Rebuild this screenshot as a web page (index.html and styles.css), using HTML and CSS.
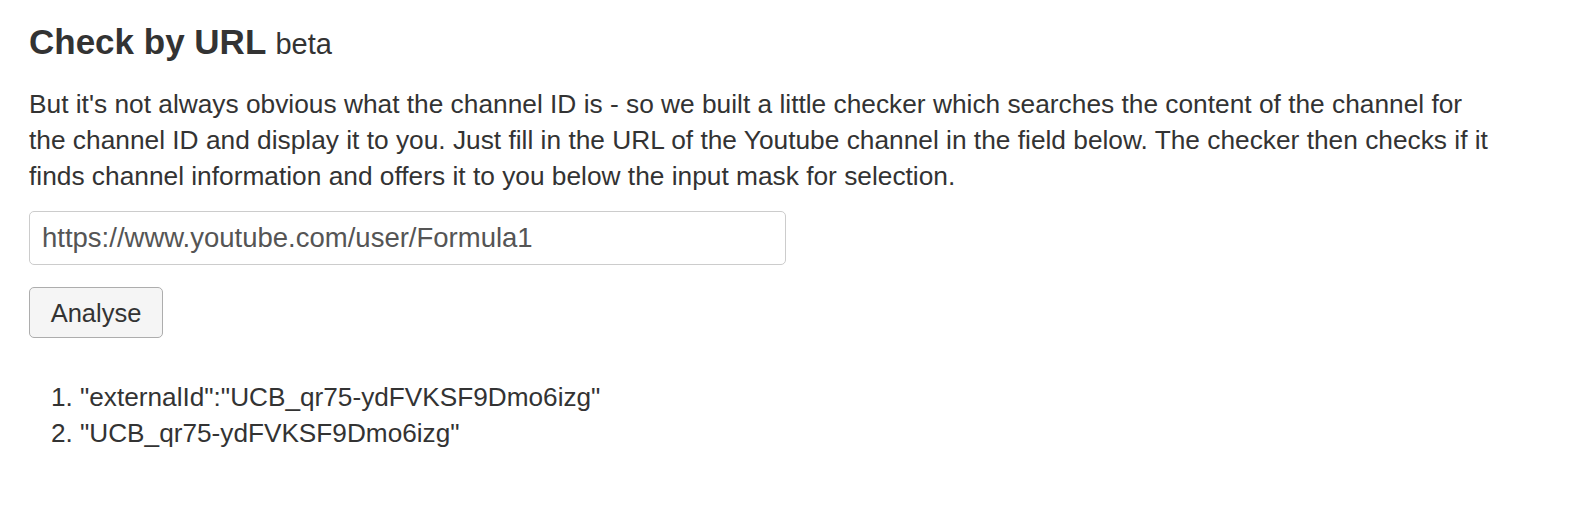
FILE: index.html
```html
<!DOCTYPE html>
<html>
	<head>
		<meta charset="utf-8">
		<title>Check by URL</title>
		<link rel="stylesheet" href="styles.css">
	</head>
	<body>
		<div class="checker">
			<h2 class="checker-title">Check by URL <small>beta</small></h2>
			<p class="checker-text">But it's not always obvious what the channel ID is - so we built a little checker which searches the content of the channel for the channel ID and display it to you. Just fill in the URL of the Youtube channel in the field below. The checker then checks if it finds channel information and offers it to you below the input mask for selection.</p>
			<form class="checker-form" onsubmit="return false;">
				<input class="checker-input" type="text" value="https://www.youtube.com/user/Formula1">
				<button class="checker-btn" type="submit">Analyse</button>
			</form>
			<ol class="checker-result">
				<li>"externalId":"UCB_qr75-ydFVKSF9Dmo6izg"</li>
				<li>"UCB_qr75-ydFVKSF9Dmo6izg"</li>
			</ol>
		</div>
	</body>
</html>
```

FILE: styles.css
```css
*{
	margin: 0;
	padding: 0;
	box-sizing: border-box;
}
body{
	font-family: "Liberation Sans", Arial, sans-serif;
	font-size: 26.3px;
	line-height: 36px;
	color: #333;
	background-color: #fff;
}
.checker{
	width: 1500px;
	padding: 24px 0 0 29px;
}
.checker-title{
	font-size: 35px;
	line-height: 36px;
	font-weight: bold;
}
.checker-title small{
	font-size: 29px;
	font-weight: normal;
}
.checker-text{
	margin-top: 24px;
}
.checker-form{
	display: flex;
	flex-direction: column;
	align-items: flex-start;
	gap: 22px;
	margin-top: 17px;
}
.checker-input{
	width: 757px;
	height: 54px;
	padding: 0 12px;
	font: inherit;
	font-size: 27.5px;
	color: #555;
	border: 1px solid #ccc;
	border-radius: 5px;
	background-color: #fff;
}
.checker-btn{
	width: 134px;
	height: 51px;
	font: inherit;
	font-size: 25.5px;
	color: #333;
	border: 1px solid #adadad;
	border-radius: 5px;
	background-color: #f5f5f5;
}
.checker-result{
	margin-top: 41px;
	padding-left: 51px;
	font-size: 26.2px;
}
```
